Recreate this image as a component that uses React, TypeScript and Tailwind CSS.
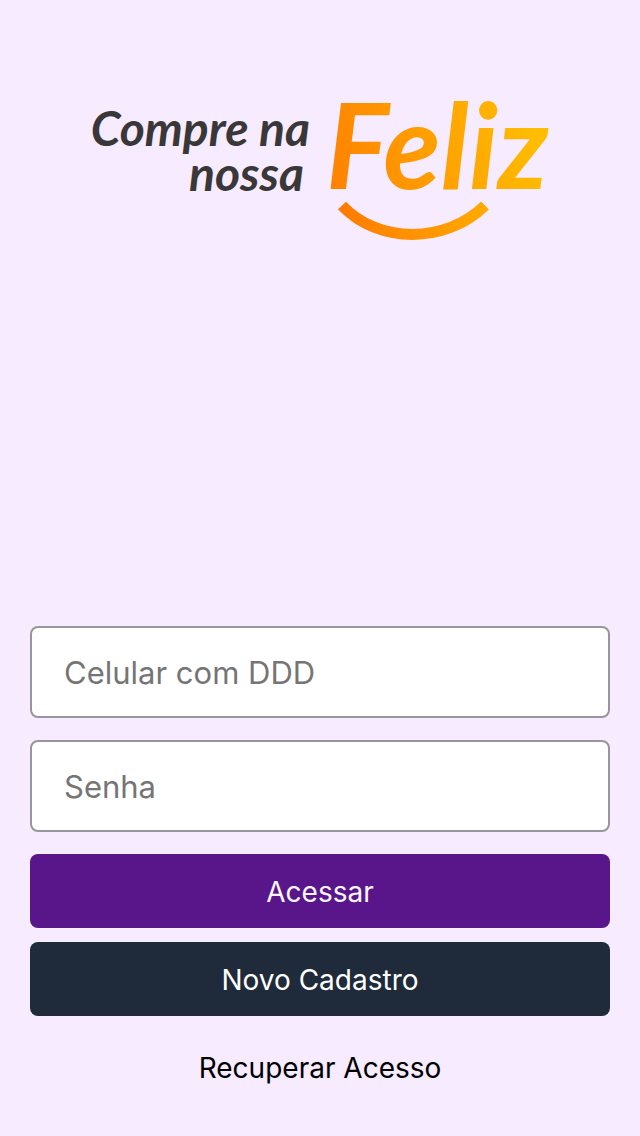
import { useState } from "react";
import type { FormEvent } from "react";

const Logo = () => {
    return (
        <svg
            viewBox="0 0 480 180"
            className="w-[480px] max-w-full font-['Lato','Open_Sans',sans-serif] italic"
            role="img"
            aria-label="Compre na nossa Feliz"
        >
            <defs>
                <linearGradient id="feliz" gradientUnits="userSpaceOnUse" x1="250" y1="140" x2="460" y2="80">
                    <stop offset="0" stopColor="#ff8000" />
                    <stop offset="1" stopColor="#ffbd00" />
                </linearGradient>
                <linearGradient id="sorriso" gradientUnits="userSpaceOnUse" x1="258" y1="0" x2="410" y2="0">
                    <stop offset="0" stopColor="#ff7a00" />
                    <stop offset="1" stopColor="#ffab00" />
                </linearGradient>
            </defs>

            <text x="230" y="78" textAnchor="end" fontSize="48" fontWeight="700" fill="#3a3738">Compre na</text>
            <text x="224" y="123" textAnchor="end" fontSize="48" fontWeight="700" fill="#3a3738">nossa</text>
            <text x="246" y="121" fontSize="118" fontWeight="700" fill="url(#feliz)">Feliz</text>

            <path d="M262 137.500 C298 176 366 176 405 137.500" fill="none" stroke="url(#sorriso)" strokeWidth="11" />
        </svg>
    );
};

const App = () => {

    const [celular, setCelular] = useState("");
    const [senha, setSenha] = useState("");

    const handleSubmit = (e: FormEvent) => {
        e.preventDefault();
    };

    return (
        <div className="flex min-h-screen flex-col bg-[#f6ebff] px-[30px] pt-[68px] pb-8 font-['Inter',sans-serif]">
            <header className="flex justify-center">
                <Logo />
            </header>

            <form onSubmit={handleSubmit} className="mt-auto flex flex-col pt-12">
                <input
                    type="tel"
                    aria-label="Celular com DDD"
                    placeholder="Celular com DDD"
                    value={celular}
                    onChange={(e) => setCelular(e.target.value)}
                    className="mb-[22px] h-[92px] w-full rounded-lg border-2 border-[#99959c] bg-white px-8 text-[31px] text-black placeholder:text-[#757575]"
                />
                <input
                    type="password"
                    aria-label="Senha"
                    placeholder="Senha"
                    value={senha}
                    onChange={(e) => setSenha(e.target.value)}
                    className="mb-[22px] h-[92px] w-full rounded-lg border-2 border-[#99959c] bg-white px-8 text-[31px] text-black placeholder:text-[#757575]"
                />

                <div className="flex flex-col gap-3.5 text-[28px]">
                    <button type="submit" className="h-[74px] rounded-lg bg-[#59168b] pt-0.5 text-[#faf5ff]">
                        Acessar
                    </button>
                    <button type="button" className="h-[74px] rounded-lg bg-[#1f2b3a] pt-0.5 text-white">
                        Novo Cadastro
                    </button>
                    <button type="button" className="h-[74px] rounded-lg pt-0.5 text-black">
                        Recuperar Acesso
                    </button>
                </div>
            </form>
        </div>
    );
};

export default App;
